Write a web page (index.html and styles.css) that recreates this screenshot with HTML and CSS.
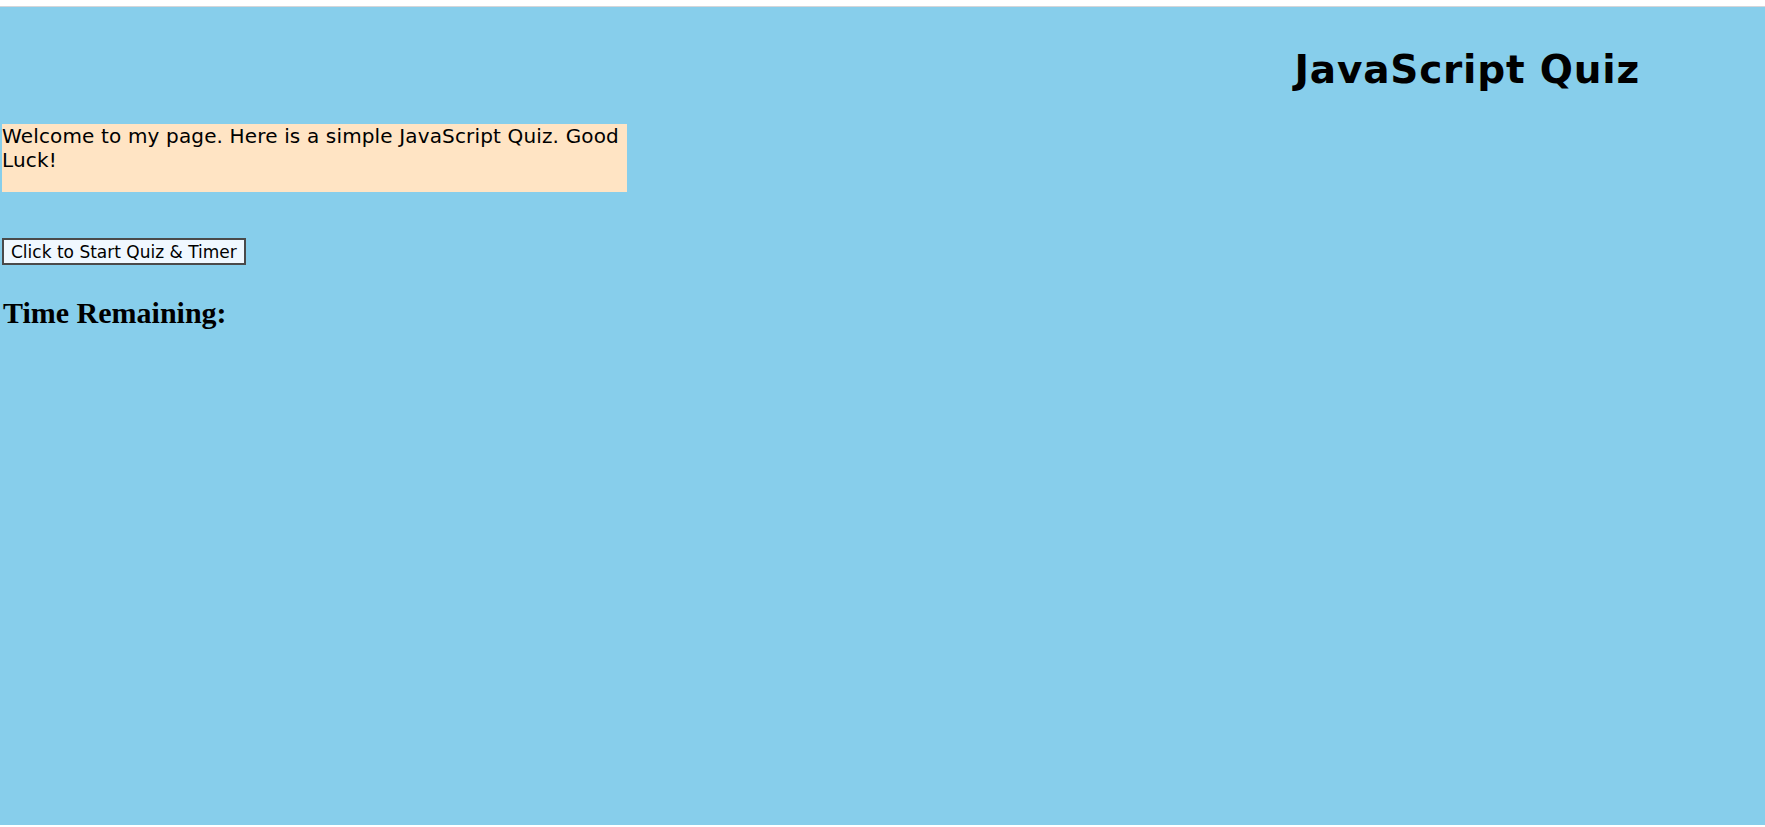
FILE: index.html
```html
<!DOCTYPE html>
<html lang="en">
<head>
<meta charset="utf-8">
<title>JavaScript Quiz</title>
<link rel="stylesheet" href="styles.css">
</head>
<body>
<div class="page">
  <header class="header">
    <h1 class="title">JavaScript Quiz</h1>
  </header>
  <div class="welcome">Welcome to my page. Here is a simple JavaScript Quiz. Good Luck!</div>
  <button class="start-btn" type="button">Click to Start Quiz &amp; Timer</button>
  <h2 class="timer">Time Remaining:</h2>
</div>
</body>
</html>
```

FILE: styles.css
```css
html, body {
  margin: 0;
  padding: 0;
  background: #ffffff;
}

body {
  padding-top: 6px;
  font-family: "DejaVu Sans", Verdana, sans-serif;
}

.page {
  border-top: 1px solid #d3d6da;
  background: #87ceeb;
  height: 819px;
  box-sizing: border-box;
  display: flex;
  flex-direction: column;
  align-items: flex-start;
}

.header {
  align-self: stretch;
  display: flex;
  justify-content: flex-end;
  padding-right: 125px;
  padding-top: 40px;
}

.title {
  margin: 0;
  font-family: "DejaVu Sans", Verdana, sans-serif;
  font-weight: bold;
  font-size: 39px;
  letter-spacing: 0.8px;
  line-height: 45px;
  color: #000;
}

.welcome {
  margin: 32px 0 0 2px;
  width: 625px;
  height: 68px;
  box-sizing: border-box;
  background: #ffe4c4;
  font-size: 20px;
  letter-spacing: 0.15px;
  line-height: 24px;
  color: #000;
}

.start-btn {
  margin: 46px 0 0 2px;
  padding: 0 7px;
  height: 27px;
  background: #f0f8ff;
  border: 2px solid #4a4a4a;
  border-radius: 0;
  font-family: "DejaVu Sans", Verdana, sans-serif;
  font-size: 17px;
  line-height: 22px;
  color: #000;
}

.timer {
  margin: 31px 0 0 3px;
  font-family: "Liberation Serif", "Times New Roman", serif;
  font-weight: bold;
  font-size: 30px;
  line-height: 34px;
  color: #000;
}
```
